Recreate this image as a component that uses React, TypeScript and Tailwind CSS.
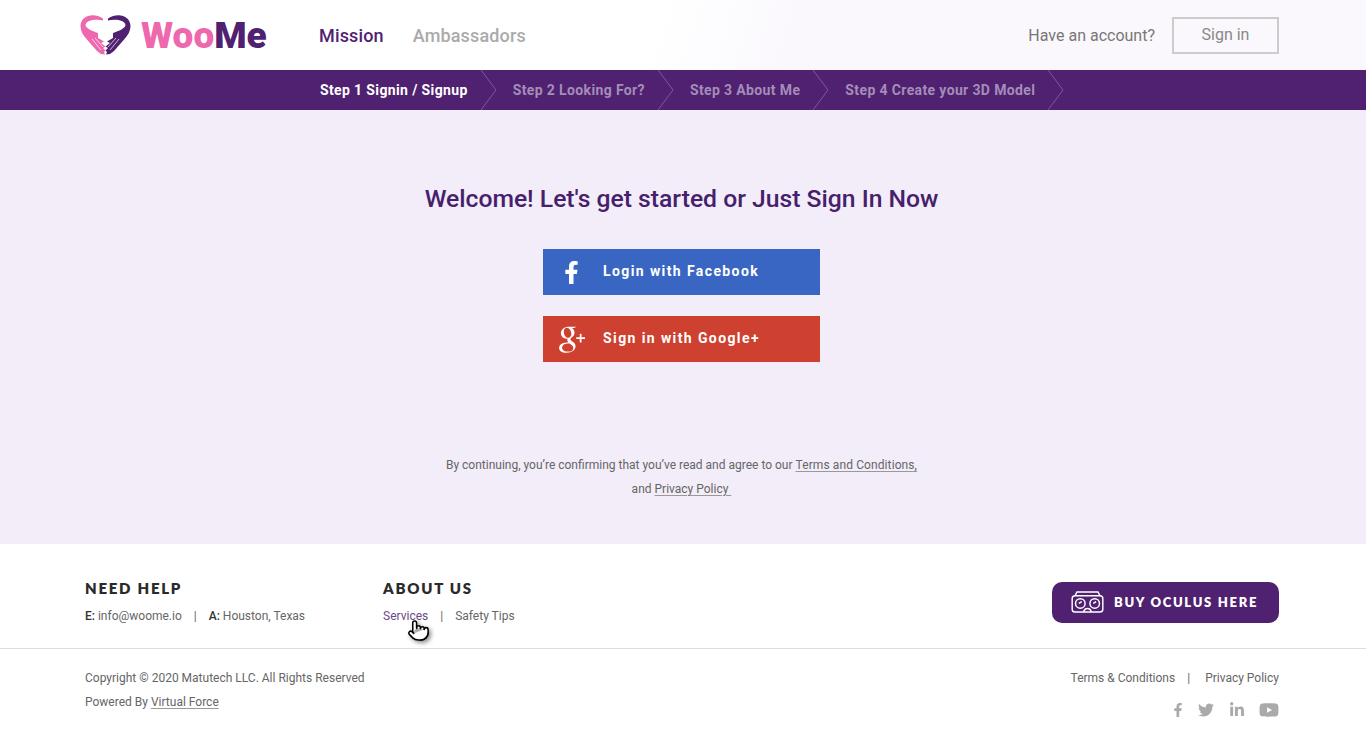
import { Pointer } from "lucide-react";
import { FaFacebookF, FaLinkedinIn, FaTwitter, FaYoutube } from "react-icons/fa";
import { TiSocialGooglePlus } from "react-icons/ti";

const steps = ["Step 1 Signin / Signup", "Step 2 Looking For?", "Step 3 About Me", "Step 4 Create your 3D Model"];

const hand =
  "M25 6.5 C20 3 14 2.5 10 4 C5 5.5 2.5 10 2.5 14 C2.5 19 5 23 8.5 27 L19 39 L23 42 L27 42.5 L26 40 L27.5 38.5 L25 36 L27.5 34.5 L23 31 L26 29.5 L20 26 L20 21 C14 19 7.5 16 7.5 13 C8 8 18 6.5 25 8.5Z";

function Chevron() {
  return (
    <svg width="17" height="40" viewBox="0 0 17 40" fill="none" className="shrink-0">
      <path d="M1 0 L16 20 L1 40" stroke="#7a5a94" strokeWidth="1" />
    </svg>
  );
}

function Logo() {
  return (
    <svg width="56" height="48" viewBox="0 0 56 48" className="shrink-0 mt-[2px]">
      <path d={hand} fill="#ee68ae" />
      <path d="M14 27 L23 38 M17 26 L25 35" stroke="white" strokeWidth="0.7" fill="none" />
      <g transform="translate(55 0) scale(-1 1)">
        <path d={hand} fill="#4f2170" />
        <path d="M14 27 L23 38 M17 26 L25 35" stroke="white" strokeWidth="0.7" fill="none" />
      </g>
    </svg>
  );
}

function OculusIcon() {
  return (
    <svg width="33" height="23" viewBox="0 0 34 24" fill="none" stroke="white" strokeWidth="1.5" className="shrink-0">
      <path d="M4 5 L6 1 H28 L30 5" />
      <rect x="1" y="5" width="32" height="17" rx="3" />
      <circle cx="9.5" cy="13" r="5" />
      <circle cx="24.5" cy="13" r="5" />
      <path d="M8 13 L11 11 M23 13 L26 11" />
      <path d="M13 22 C14 17 20 17 21 22" />
    </svg>
  );
}

export default function App() {
  return (
    <div className="min-h-[747px] bg-white font-['Roboto',sans-serif] text-[12px] text-[#666]">
      {/* Top nav */}
      <header className="h-[70px] flex items-center pl-[78px] pr-[87px] bg-[linear-gradient(108deg,#ffffff_48%,#faf8fd_58%)]">
        <Logo />
        <span className="ml-[7px] w-[125px] font-black text-[37px] leading-none text-[#ee68ae]">
          Woo<span className="text-[#4f2170]">Me</span>
        </span>
        <nav className="ml-[53px] flex gap-[29px] text-[18px] tracking-[0.15px]">
          <a className="font-medium text-[#4f2170]">Mission</a>
          <a className="font-medium text-[#aaaaaa]">Ambassadors</a>
        </nav>
        <span className="ml-auto mt-[2px] text-[16px] text-[#777]">Have an account?</span>
        <button className="ml-[17px] w-[107px] h-[37px] border-2 border-[#cccccc] text-[16px] text-[#888]">
          Sign in
        </button>
      </header>

      {/* Step bar */}
      <div className="h-[40px] bg-[#4f2170] flex items-center pl-[320px] text-[14px] font-bold tracking-[0.37px]">
        {steps.map((s, i) => (
          <div key={s} className="flex items-center">
            <span className={i === 0 ? "text-white" : "text-[#a48db8]"}>{s}</span>
            <div className="ml-[12px] mr-[16px]">
              <Chevron />
            </div>
          </div>
        ))}
      </div>

      {/* Welcome panel */}
      <main className="h-[434px] bg-[#f2edf8] flex flex-col items-center pt-[71px] pr-[3px]">
        <h1 className="text-[24.7px] leading-[36px] font-medium text-[#46206c]">
          Welcome! Let's get started or Just Sign In Now
        </h1>
        <div className="mt-[32px] flex flex-col gap-[21px] text-white text-[14px] font-bold tracking-[1.4px]">
          <button className="w-[277px] h-[46px] pb-[2px] bg-[#3a66c3] flex items-center text-left">
            <span className="w-[60px] flex justify-center pr-[4px] pt-[2px]">
              <FaFacebookF size={23} />
            </span>
            Login with Facebook
          </button>
          <button className="w-[277px] h-[46px] pb-[2px] bg-[#ce402f] flex items-center text-left">
            <span className="w-[60px] flex justify-center pr-[4px] pt-[2px]">
              <TiSocialGooglePlus size={42} />
            </span>
            Sign in with Google+
          </button>
        </div>
        <p className="mt-[91px] text-center leading-[24px]">
          By continuing, you’re confirming that you’ve read and agree to our{" "}
          <a className="underline underline-offset-2 decoration-[#999] tracking-[0.1px]">Terms and Conditions,</a>
          <br />
          and <a className="underline underline-offset-2 decoration-[#999]">Privacy Policy&nbsp;</a>
        </p>
      </main>

      <footer>
        {/* Footer top */}
        <div className="h-[105px] border-b border-[#dddddd] pl-[85px] pr-[87px] flex items-start pt-[35px]">
          <div className="w-[298px]">
            <h4 className="font-['Lato',sans-serif] font-extrabold text-[15px] leading-[18px] tracking-[1.75px] text-[#2a2a2a]">
              NEED HELP
            </h4>
            <p className="mt-[10px] leading-[18px]">
              <b className="font-medium text-[#333]">E:</b> info@woome.io
              <span className="mx-[12px]">|</span>
              <b className="font-medium text-[#333]">A:</b> Houston, Texas
            </p>
          </div>
          <div className="relative">
            <h4 className="font-['Lato',sans-serif] font-extrabold text-[15px] leading-[18px] tracking-[1.75px] text-[#2a2a2a]">
              ABOUT US
            </h4>
            <p className="mt-[10px] leading-[18px]">
              <a className="text-[#6b4a86]">Services</a>
              <span className="mx-[12px]">|</span>
              <a>Safety Tips</a>
            </p>
            <Pointer
              size={23}
              fill="white"
              color="black"
              strokeWidth={1.6}
              className="absolute left-[24px] top-[40px] drop-shadow-[2px_2px_2px_rgba(0,0,0,0.45)]"
            />
          </div>
          <button className="ml-auto mt-[3px] w-[227px] h-[41px] rounded-[10px] bg-[#4f2170] flex items-center pl-[19px] gap-[10px] font-['Lato',sans-serif] font-extrabold text-[13px] tracking-[1.7px] text-white">
            <OculusIcon />
            BUY OCULUS HERE
          </button>
        </div>

        {/* Footer bottom */}
        <div className="pl-[85px] pr-[87px] pt-[17px] flex justify-between leading-[24px]">
          <div>
            <p>Copyright © 2020 Matutech LLC. All Rights Reserved</p>
            <p>
              Powered By <a className="underline underline-offset-2 decoration-[#999]">Virtual Force</a>
            </p>
          </div>
          <div className="flex flex-col items-end">
            <p>
              Terms &amp; Conditions<span className="ml-[12px] mr-[15px]">|</span>Privacy Policy
            </p>
            <div className="mt-[10px] flex items-center gap-[14px] text-[#aaaaaa]">
              <FaFacebookF size={14} />
              <FaTwitter size={16} className="mr-[1px] -ml-[1px]" />
              <FaLinkedinIn size={16} />
              <FaYoutube size={20} />
            </div>
          </div>
        </div>
      </footer>
    </div>
  );
}
